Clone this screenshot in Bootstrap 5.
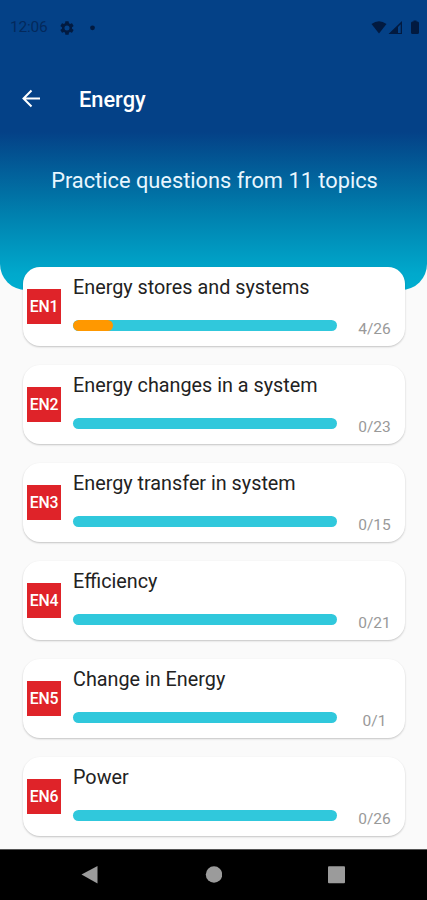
<!DOCTYPE html>
<html lang="en">
<head>
<meta charset="utf-8">
<meta name="viewport" content="width=device-width, initial-scale=1">
<title>Energy</title>
<link href="https://cdn.jsdelivr.net/npm/bootstrap@5.3.0/dist/css/bootstrap.min.css" rel="stylesheet">
<style>
body { font-family: Roboto, "Liberation Sans", sans-serif; background: #fafafa; }
.phone { height: 900px; }
.hero { height: 290px; background: linear-gradient(#044187 0, #044187 132px, #0080ae 214px, #00a9cc 274px, #00aed0 290px); border-radius: 0 0 26px 26px; }
.status { height: 55px; padding: 0 7px 0 10px; color: #021a40; font-size: 15.5px; }
.clock { width: 50px; color: #03295c; letter-spacing: -.2px; padding-top: 1px; }
.appbar { height: 88px; padding-left: 21px; }
.appbar h1 { font-size: 21.8px; line-height: 28px; font-weight: 500; margin: 1px 0 0 38px; }
.subtitle { font-size: 21.8px; line-height: 30px; padding: 23px 0 0 2px; color: #e8f6ff; }
.topics { margin-top: -23px; padding: 0 22px 0 23px; gap: 19px; }
.topic { height: 79px; border-radius: 17px; box-shadow: 0 1px 2px rgba(0,0,0,.22); padding-left: 4px; }
.code { width: 34px; height: 35px; background: #df2329; font-size: 15.8px; font-weight: 500; letter-spacing: -.2px; }
.info { margin-left: 12px; padding-top: 6px; }
.info h2 { font-size: 19.8px; line-height: 30px; font-weight: 400; color: #222; }
.progress.track { width: 264px; height: 11px; border-radius: 6px; background: #30c8dc; margin-top: 17px; }
.progress-bar.done { background: #ff9800; border-radius: 6px; }
.score { width: 68px; padding-left: 7px; font-size: 15.5px; line-height: 18px; color: #999; margin-bottom: 8px; }
.sysnav { height: 51px; background: #000; padding: 0 82px 0 81px; border-top: 1px solid #555; }
</style>
</head>
<body>
<div class="phone d-flex flex-column overflow-hidden">
  <header class="hero flex-shrink-0 text-white">
    <div class="status d-flex align-items-center">
      <span class="clock">12:06</span>
      <svg width="14" height="14" viewBox="2 2 20 20" fill="currentColor"><path fill-rule="evenodd" d="M19.14 12.94c.04-.3.06-.61.06-.94s-.02-.64-.07-.94l2.03-1.58c.18-.14.23-.41.12-.61l-1.92-3.32c-.12-.22-.37-.29-.59-.22l-2.39.96c-.5-.38-1.03-.7-1.62-.94l-.36-2.54A.48.48 0 0 0 13.92 2.4h-3.84c-.24 0-.43.17-.47.41l-.36 2.54c-.59.24-1.13.57-1.62.94l-2.39-.96c-.22-.08-.47 0-.59.22L2.74 8.87c-.12.21-.08.47.12.61l2.03 1.58c-.05.3-.09.63-.09.94s.02.64.07.94l-2.03 1.58c-.18.14-.23.41-.12.61l1.92 3.32c.12.22.37.29.59.22l2.39-.96c.5.38 1.03.7 1.62.94l.36 2.54c.05.24.24.41.48.41h3.84c.24 0 .44-.17.47-.41l.36-2.54c.59-.24 1.13-.56 1.62-.94l2.39.96c.22.08.47 0 .59-.22l1.92-3.32c.12-.22.07-.47-.12-.61zM12 15.6a3.6 3.6 0 1 1 0-7.2 3.6 3.6 0 0 1 0 7.2z"/></svg>
      <svg class="ms-3" width="6" height="6" viewBox="1.500 0 6 6"><circle cx="4" cy="2.800" r="2.400" fill="currentColor"/></svg>
      <svg class="ms-auto" width="49" height="16" viewBox="0 0 49 16" fill="currentColor"><path d="M.5 4Q8-1.500 15.500 4L8 13.500Z"/><path d="M17.500 14L31 1V14H29.700V4.200L27 7V14Z"/><path d="M27 13h4v1h-4z"/><path d="M41.500 1.500h1V.5h3v1h1q1.500 0 1.500 1.500V12.500q0 1.500-1.500 1.500h-5q-1.500 0-1.500-1.500V3q0-1.500 1.500-1.500z"/></svg>
    </div>
    <div class="appbar d-flex align-items-center">
      <svg width="20" height="20" viewBox="0 0 20 20" fill="none" stroke="#fff" stroke-width="2"><path d="M19 9.500H3M10.500 1.500L2.500 9.500L10.500 17.500"/></svg>
      <h1>Energy</h1>
    </div>
    <p class="subtitle mb-0 text-center">Practice questions from 11 topics</p>
  </header>
  <main class="topics flex-grow-1 d-flex flex-column">
    <article class="topic bg-white d-flex flex-shrink-0"><div class="code flex-shrink-0 align-self-center d-flex align-items-center justify-content-center text-white">EN1</div><div class="info flex-shrink-0"><h2 class="mb-0">Energy stores and systems</h2><div class="progress track"><div class="progress-bar done" style="width:15.2%"></div></div></div><span class="score align-self-end text-center">4/26</span></article>
    <article class="topic bg-white d-flex flex-shrink-0"><div class="code flex-shrink-0 align-self-center d-flex align-items-center justify-content-center text-white">EN2</div><div class="info flex-shrink-0"><h2 class="mb-0">Energy changes in a system</h2><div class="progress track"></div></div><span class="score align-self-end text-center">0/23</span></article>
    <article class="topic bg-white d-flex flex-shrink-0"><div class="code flex-shrink-0 align-self-center d-flex align-items-center justify-content-center text-white">EN3</div><div class="info flex-shrink-0"><h2 class="mb-0">Energy transfer in system</h2><div class="progress track"></div></div><span class="score align-self-end text-center">0/15</span></article>
    <article class="topic bg-white d-flex flex-shrink-0"><div class="code flex-shrink-0 align-self-center d-flex align-items-center justify-content-center text-white">EN4</div><div class="info flex-shrink-0"><h2 class="mb-0">Efficiency</h2><div class="progress track"></div></div><span class="score align-self-end text-center">0/21</span></article>
    <article class="topic bg-white d-flex flex-shrink-0"><div class="code flex-shrink-0 align-self-center d-flex align-items-center justify-content-center text-white">EN5</div><div class="info flex-shrink-0"><h2 class="mb-0">Change in Energy</h2><div class="progress track"></div></div><span class="score align-self-end text-center">0/1</span></article>
    <article class="topic bg-white d-flex flex-shrink-0"><div class="code flex-shrink-0 align-self-center d-flex align-items-center justify-content-center text-white">EN6</div><div class="info flex-shrink-0"><h2 class="mb-0">Power</h2><div class="progress track"></div></div><span class="score align-self-end text-center">0/26</span></article>
  </main>
  <nav class="sysnav flex-shrink-0 d-flex align-items-center justify-content-between">
    <svg width="17" height="18" fill="#9b9b9b"><path d="M.5 8.500L16.500 0V17.500Z"/></svg>
    <svg width="17" height="18" fill="#9b9b9b"><circle cx="9" cy="8.500" r="8.200"/></svg>
    <svg width="17" height="18" fill="#9b9b9b"><rect y=".2" width="17" height="17" rx="1"/></svg>
  </nav>
</div>
<script src="https://cdn.jsdelivr.net/npm/bootstrap@5.3.0/dist/js/bootstrap.bundle.min.js"></script>
</body>
</html>
